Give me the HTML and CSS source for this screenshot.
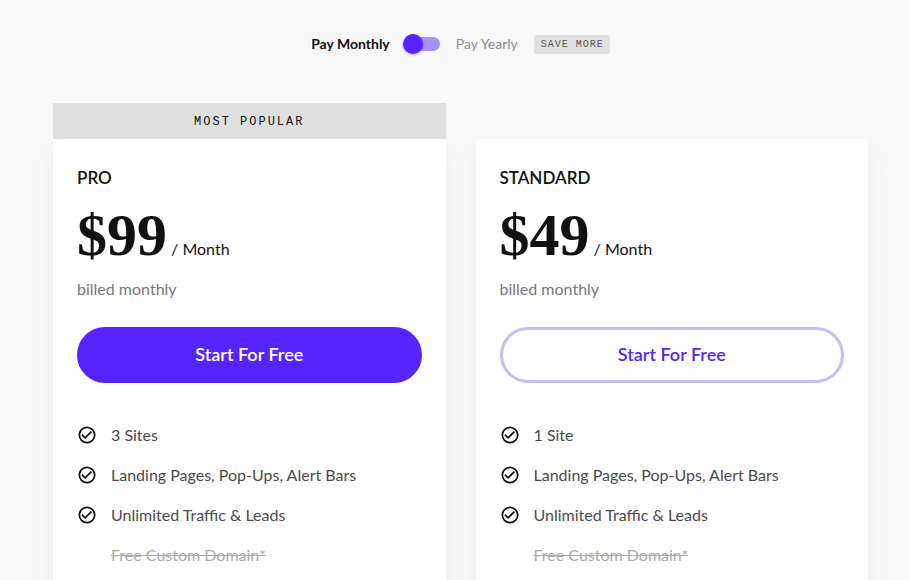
FILE: index.html
```html
<!DOCTYPE html>
<html lang="en">

<head>
    <meta charset="UTF-8">
    <meta name="viewport" content="width=device-width, initial-scale=1.0">
    <title>Pricing</title>
    <link rel="stylesheet" href="styles.css">
</head>

<body>
    <!-- check icon used by the feature lists -->
    <svg class="sprite" aria-hidden="true">
        <symbol id="check" viewBox="0 0 20 20">
            <circle cx="10" cy="10" r="7.7" />
            <path d="M4.8 9.6l3.4 3.2 6.2-6.2" />
        </symbol>
    </svg>

    <div class="billing">
        <label class="billing-monthly" for="period">Pay Monthly</label>
        <input class="switch" type="checkbox" id="period">
        <label class="billing-yearly" for="period">Pay Yearly</label>
        <span class="save">SAVE MORE</span>
    </div>

    <main class="plans">
        <section class="plan">
            <div class="popular">MOST POPULAR</div>
            <div class="card">
                <h2>PRO</h2>
                <p class="price"><strong>$99</strong> <span>/ Month</span></p>
                <p class="billed">billed monthly</p>
                <button class="btn btn-full" type="button">Start For Free</button>
                <ul class="features">
                    <li><svg><use href="#check" /></svg>3 Sites</li>
                    <li><svg><use href="#check" /></svg>Landing Pages, Pop-Ups, Alert Bars</li>
                    <li><svg><use href="#check" /></svg>Unlimited Traffic &amp; Leads</li>
                    <li class="off"><s>Free Custom Domain*</s></li>
                </ul>
            </div>
        </section>

        <section class="plan">
            <div class="card">
                <h2>STANDARD</h2>
                <p class="price"><strong>$49</strong> <span>/ Month</span></p>
                <p class="billed">billed monthly</p>
                <button class="btn btn-line" type="button">Start For Free</button>
                <ul class="features">
                    <li><svg><use href="#check" /></svg>1 Site</li>
                    <li><svg><use href="#check" /></svg>Landing Pages, Pop-Ups, Alert Bars</li>
                    <li><svg><use href="#check" /></svg>Unlimited Traffic &amp; Leads</li>
                    <li class="off"><s>Free Custom Domain*</s></li>
                </ul>
            </div>
        </section>
    </main>
</body>

</html>
```

FILE: styles.css
```css
* {
    margin: 0;
    padding: 0;
    box-sizing: border-box;
}

body {
    display: flex;
    flex-direction: column;
    min-height: 100vh;
    padding: 34px 42px 0 53px;
    background-color: #f8f8f8;
    color: #111;
    font-family: Lato, "Liberation Sans", sans-serif;
    font-size: 16px;
    line-height: 24px;
}

.sprite {
    display: none;
}

/* monthly / yearly switch */
.billing {
    display: flex;
    justify-content: center;
    align-items: center;
    gap: 16px;
    margin-bottom: 49px;
    font-size: 14px;
    line-height: 20px;
}

.billing-monthly {
    font-weight: bold;
}

.billing-yearly {
    color: #8c8c8c;
}

.switch {
    appearance: none;
    position: relative;
    width: 34px;
    height: 14px;
    border-radius: 7px;
    background-color: #a991fb;
    cursor: pointer;
}

.switch::before {
    content: "";
    position: absolute;
    top: -3px;
    left: -3px;
    width: 20px;
    height: 20px;
    border-radius: 50%;
    background-color: #5724ff;
    box-shadow: 0 1px 3px rgba(0, 0, 0, .3);
}

.switch:checked::before {
    left: 17px;
}

.save {
    padding: 1px 6px 0 7px;
    border-radius: 2px;
    background-color: #dfdfdf;
    color: #555;
    font-family: "Liberation Mono", monospace;
    font-size: 10px;
    line-height: 18px;
    letter-spacing: 1px;
}

/* plans */
.plans {
    display: grid;
    grid-template-columns: 1fr 1fr;
    gap: 30px;
    flex: 1;
}

.plan {
    display: flex;
    flex-direction: column;
    justify-content: flex-end;
}

.plan:last-child {
    padding-top: 36px;
}

.popular {
    padding-top: 2px;
    background-color: #dfdfdf;
    font-family: "Liberation Mono", monospace;
    font-size: 12px;
    line-height: 34px;
    letter-spacing: 2px;
    text-align: center;
}

.card {
    flex: 1;
    padding: 27px 24px 0;
    background-color: #fff;
    box-shadow: 0 16px 24px rgba(0, 0, 0, .06);
}

.card h2 {
    font-size: 17px;
    font-weight: 600;
    line-height: 24px;
}

.price {
    margin-top: 15px;
}

.price strong {
    font-family: "Liberation Serif", serif;
    font-size: 60px;
    line-height: 60px;
}

.billed {
    margin-top: 12px;
    color: #777;
}

.btn {
    display: block;
    width: 100%;
    height: 56px;
    margin-top: 26px;
    padding-bottom: 2px;
    border: 3px solid #5724ff;
    border-radius: 28px;
    font-family: inherit;
    font-size: 18px;
    font-weight: 600;
    cursor: pointer;
}

.btn-full {
    background-color: #5724ff;
    color: #fff;
}

.btn-line {
    border-color: #c9bbf6;
    background-color: #fff;
    color: #5724ff;
}

.features {
    margin-top: 40px;
    list-style: none;
    color: #4a4a4a;
}

.features li {
    display: flex;
    align-items: center;
    gap: 14px;
    margin-bottom: 16px;
}

.features li:last-child {
    margin-bottom: 0;
}

.features svg {
    width: 20px;
    height: 20px;
    fill: none;
    stroke: #111;
    stroke-width: 1.7;
}

.features .off {
    padding-left: 34px;
    color: #aaa;
}
```
